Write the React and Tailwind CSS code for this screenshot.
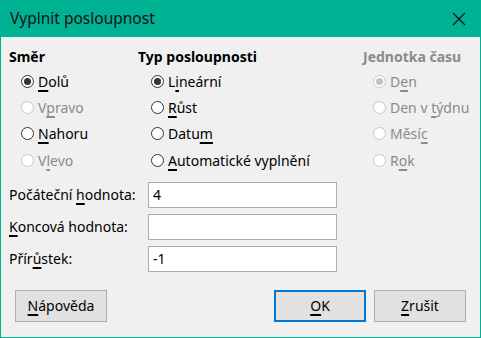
import React, { useState } from 'react';

function Radio({ checked, disabled, label, onClick }) {
  return (
    <button
      type="button"
      onClick={onClick}
      disabled={disabled}
      className={`flex items-center gap-[4px] h-[26.4px] text-left ${disabled ? 'text-[#8a8a8a]' : 'text-black'}`}
    >
      <span
        className={`w-[13px] h-[13px] rounded-full border flex items-center justify-center bg-white ${disabled ? 'border-[#c8c8c8]' : 'border-[#333]'}`}
      >
        {checked && (
          <span className={`w-[7px] h-[7px] rounded-full ${disabled ? 'bg-[#c2c2c2]' : 'bg-[#333]'}`} />
        )}
      </span>
      <span>{label}</span>
    </button>
  );
}

function U({ children }) {
  return <span className="underline decoration-[1.5px] underline-offset-[3px]">{children}</span>;
}

function Field({ label, value }) {
  return (
    <div className="flex items-center h-[26px]">
      <div className="w-[139px]">{label}</div>
      <input
        defaultValue={value}
        className="w-[189px] h-[26px] bg-white border border-[#adadad] px-[4px] outline-none"
      />
    </div>
  );
}

export default function App() {
  const [smer, setSmer] = useState('dolu');
  const [typ, setTyp] = useState('linearni');

  return (
    <div
      className="w-[481px] h-[338px] flex flex-col bg-[#f0f0f0] text-[14px] text-black"
      style={{ fontFamily: '"Noto Sans", "Open Sans", sans-serif' }}
    >
      {/* title bar */}
      <div className="h-[37px] shrink-0 bg-[#00b294] flex items-center justify-between pl-[10px] pr-[15px]">
        <span className="text-[15.5px] text-[#111]">Vyplnit posloupnost</span>
        <svg width="14" height="14" viewBox="0 0 14 14">
          <path d="M1 1 L13 13 M13 1 L1 13" stroke="#111" strokeWidth="1.2" />
        </svg>
      </div>

      <div className="flex-1 flex flex-col border-x border-b border-[#00b294] pl-[8px] pt-[10px]">
        <div className="flex">
          <div className="w-[129px]">
            <div className="font-bold h-[21px] leading-[20px]">Směr</div>
            <div className="pl-[12px] flex flex-col">
              <Radio checked={smer === 'dolu'} onClick={() => setSmer('dolu')} label={<><U>D</U>olů</>} />
              <Radio disabled label={<>V<U>p</U>ravo</>} />
              <Radio checked={smer === 'nahoru'} onClick={() => setSmer('nahoru')} label={<><U>N</U>ahoru</>} />
              <Radio disabled label={<>V<U>l</U>evo</>} />
            </div>
          </div>
          <div className="w-[225px]">
            <div className="font-bold h-[21px] leading-[20px]">Typ posloupnosti</div>
            <div className="pl-[13px] flex flex-col">
              <Radio checked={typ === 'linearni'} onClick={() => setTyp('linearni')} label={<>L<U>i</U>neární</>} />
              <Radio checked={typ === 'rust'} onClick={() => setTyp('rust')} label={<><U>R</U>ůst</>} />
              <Radio checked={typ === 'datum'} onClick={() => setTyp('datum')} label={<>Datu<U>m</U></>} />
              <Radio checked={typ === 'auto'} onClick={() => setTyp('auto')} label={<><U>A</U>utomatické vyplnění</>} />
            </div>
          </div>
          <div className="flex-1">
            <div className="font-bold h-[21px] leading-[20px] text-[#8a8a8a]">Jednotka času</div>
            <div className="pl-[10px] flex flex-col">
              <Radio disabled checked label={<>D<U>e</U>n</>} />
              <Radio disabled label={<>Den v <U>t</U>ýdnu</>} />
              <Radio disabled label={<>Měsí<U>c</U></>} />
              <Radio disabled label={<>R<U>o</U>k</>} />
            </div>
          </div>
        </div>

        <div className="flex flex-col gap-[6px] mt-[8px]">
          <Field label={<>Počáteční <U>h</U>odnota:</>} value="4" />
          <Field label={<><U>K</U>oncová hodnota:</>} value="" />
          <Field label={<>Přír<U>ů</U>stek:</>} value="-1" />
        </div>

        <div className="flex items-center mt-[18px] pr-[14px]">
          <button className="ml-[6px] w-[92px] h-[32px] bg-[#e1e1e1] border border-[#adadad]">
            <U>N</U>ápověda
          </button>
          <div className="flex-1" />
          <button className="w-[92px] h-[32px] bg-[#e1e1e1] border-2 border-[#0078d7]">
            <U>O</U>K
          </button>
          <button className="ml-[8px] w-[92px] h-[32px] bg-[#e1e1e1] border border-[#adadad]">
            <U>Z</U>rušit
          </button>
        </div>
      </div>
    </div>
  );
}
